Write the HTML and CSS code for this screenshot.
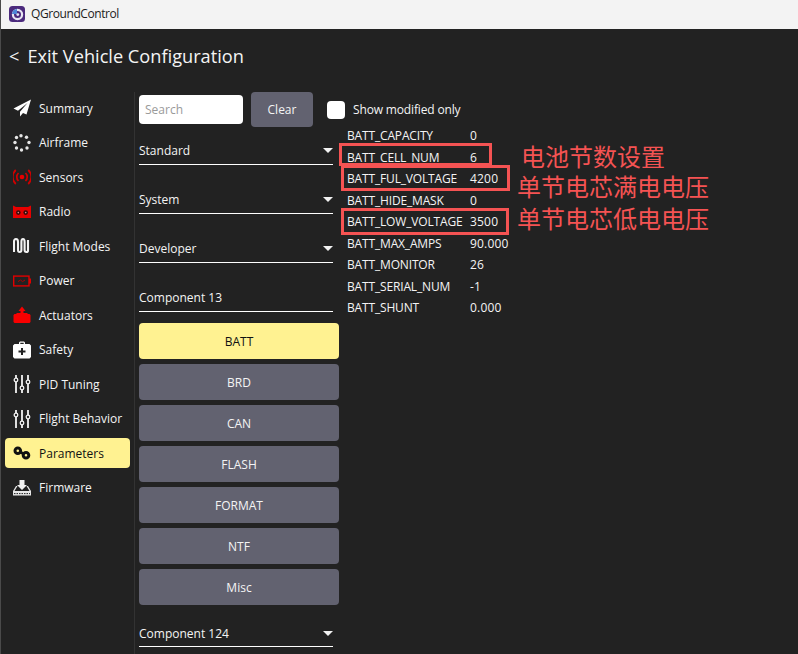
FILE: index.html
```html
<!DOCTYPE html>
<html lang="en">
<head>
<meta charset="utf-8">
<title>QGroundControl</title>
<link rel="stylesheet" href="styles.css">
</head>
<body>
<div class="window">
  <header class="titlebar">
    <svg class="app-icon" viewBox="0 0 16 16"><rect width="16" height="16" rx="3.5" fill="#4b2a7d"/><circle cx="8.5" cy="8.5" r="4.6" fill="none" stroke="#e8e6f2" stroke-width="2.2"/><path d="M3 8a5.5 5.5 0 0 1 5-5v5z" fill="#4f86d6"/><circle cx="8.800" cy="8.600" r="1.400" fill="#e8e6f2"/></svg>
    <span class="app-name">QGroundControl</span>
  </header>
  <div class="exit-bar"><span class="chev">&lt;</span><span>Exit Vehicle Configuration</span></div>
  <div class="main">
    <nav class="sidebar">
      <div class="nav-item"><svg class="ico" viewBox="0 0 18 18"><path d="M18 .5 .5 9.500l4.500 2.200L14.500 4 7 12.800V17.500l3-3.600 3.500 1.700z" fill="#fff"/></svg><span>Summary</span></div>
      <div class="nav-item"><svg class="ico" viewBox="0 0 18 18" fill="#e6e6e6"><circle cx="8" cy="1.800" r="1.700"/><circle cx="13.500" cy="3.300" r="1.700"/><circle cx="16" cy="8.500" r="1.700"/><circle cx="14" cy="14" r="1.700"/><circle cx="8.500" cy="16" r="1.700"/><circle cx="3.500" cy="14" r="1.700"/><circle cx="2" cy="8.500" r="1.700"/><circle cx="3.500" cy="3.500" r="1.700"/></svg><span>Airframe</span></div>
      <div class="nav-item"><svg class="ico" viewBox="0 0 18 18" fill="none" stroke="#d00000" stroke-width="1.700"><circle cx="9" cy="9" r="2.300" fill="#e80000" stroke="none"/><path d="M5.500 5a5.500 5.500 0 0 0 0 8M12.500 5a5.500 5.500 0 0 1 0 8M2.800 2a9.500 9.500 0 0 0 0 14M15.200 2a9.500 9.500 0 0 1 0 14"/></svg><span>Sensors</span></div>
      <div class="nav-item"><svg class="ico" viewBox="0 0 18 18"><path d="M0 2.500l3 1.500h12l3-1.500V15H0z" fill="#e80000"/><circle cx="5.300" cy="9.600" r="2.300" fill="#3a0a0a"/><circle cx="12.700" cy="9.600" r="2.300" fill="#3a0a0a"/><circle cx="5.300" cy="9.600" r=".8" fill="#d88"/><circle cx="12.700" cy="9.600" r=".8" fill="#d88"/></svg><span>Radio</span></div>
      <div class="nav-item"><svg class="ico" viewBox="0 0 18 18" fill="none" stroke="#f2f2f2" stroke-width="2.100"><path d="M1 15V5q0-3 2-3t2 3v8q0 2 1.700 2t1.700-2V5q0-3 1.600-3t1.600 3v8q0 2 1.800 2t1.600-2V3"/></svg><span>Flight Modes</span></div>
      <div class="nav-item"><svg class="ico" viewBox="0 0 18 18"><rect x=".7" y="4.100" width="15.300" height="9.800" fill="none" stroke="#e00000" stroke-width="1.400"/><rect x="16" y="6.500" width="2" height="5" fill="#e00000"/><path d="M5 9.600 7.500 8l2 1.600L12 8" fill="none" stroke="#b00000"/></svg><span>Power</span></div>
      <div class="nav-item"><svg class="ico" viewBox="0 0 18 18"><path d="M9 .5 12.500 5H10.500v2H14l1 1h1.500l1 1v7l-1 1h-15l-1-1V9l1-1H3l1-1h3.500V5H5.500z" fill="#f80000"/></svg><span>Actuators</span></div>
      <div class="nav-item"><svg class="ico" viewBox="0 0 18 18"><path fill-rule="evenodd" fill="#fff" d="M6 3V1.500L7 .5h4l1 1V3h4.500L18 4.500V16l-1.500 1.500h-15L0 16V4.500L1.500 3zM7.300 3h3.400V1.800H7.300zM8 7v2.500H5.500v2H8V14h2v-2.500h2.500v-2H10V7z"/></svg><span>Safety</span></div>
      <div class="nav-item"><svg class="ico" viewBox="0 0 18 18" fill="none" stroke="#f2f2f2" stroke-width="1.300"><path d="M3 0v3M3 7v11M9 0v11M9 15v3M15 0v5M15 9v9" stroke-width="1.800"/><circle cx="3" cy="5" r="1.800"/><circle cx="9" cy="13" r="1.800"/><circle cx="15" cy="7" r="1.800"/></svg><span>PID Tuning</span></div>
      <div class="nav-item"><svg class="ico" viewBox="0 0 18 18" fill="none" stroke="#f2f2f2" stroke-width="1.300"><path d="M3 0v3M3 7v11M9 0v11M9 15v3M15 0v5M15 9v9" stroke-width="1.800"/><circle cx="3" cy="5" r="1.800"/><circle cx="9" cy="13" r="1.800"/><circle cx="15" cy="7" r="1.800"/></svg><span>Flight Behavior</span></div>
      <div class="nav-item active"><svg class="ico" viewBox="0 0 18 18" fill="none" stroke="#111" stroke-width="3"><circle cx="4.800" cy="6.800" r="2.800"/><circle cx="13" cy="11.200" r="2.800"/><path d="M7 8l4 2"/></svg><span>Parameters</span></div>
      <div class="nav-item"><svg class="ico" viewBox="0 0 18 18"><path d="M6.500 1h5v5h2.500L9 11 4 6h2.500z" fill="#f2f2f2"/><path d="M3 7 0 12v4.500h18V12l-3-5h-1.500l3 5H1.500l3-5z" fill="#e6e6e6"/><path d="M1 14.600h16" stroke="#222" stroke-dasharray="1.500 1"/></svg><span>Firmware</span></div>
    </nav>
    <section class="content">
      <div class="toolbar">
        <div class="search">Search</div>
        <div class="btn clear">Clear</div>
        <div class="check"></div>
        <span class="check-label">Show modified only</span>
      </div>
      <div class="groups">
        <div class="drop first"><span>Standard</span><i class="caret"></i></div>
        <div class="drop"><span>System</span><i class="caret"></i></div>
        <div class="drop"><span>Developer</span><i class="caret"></i></div>
        <div class="drop plain"><span>Component 13</span></div>
        <div class="btn comp on">BATT</div>
        <div class="btn comp">BRD</div>
        <div class="btn comp">CAN</div>
        <div class="btn comp">FLASH</div>
        <div class="btn comp">FORMAT</div>
        <div class="btn comp">NTF</div>
        <div class="btn comp">Misc</div>
        <div class="drop last"><span>Component 124</span><i class="caret"></i></div>
      </div>
      <div class="params">
        <span class="pn">BATT_CAPACITY</span><span class="pv">0</span>
        <span class="pn">BATT_CELL_NUM</span><span class="pv">6</span>
        <span class="pn">BATT_FUL_VOLTAGE</span><span class="pv">4200</span>
        <span class="pn">BATT_HIDE_MASK</span><span class="pv">0</span>
        <span class="pn">BATT_LOW_VOLTAGE</span><span class="pv">3500</span>
        <span class="pn">BATT_MAX_AMPS</span><span class="pv">90.000</span>
        <span class="pn">BATT_MONITOR</span><span class="pv">26</span>
        <span class="pn">BATT_SERIAL_NUM</span><span class="pv">-1</span>
        <span class="pn">BATT_SHUNT</span><span class="pv">0.000</span>
      </div>
    </section>
  </div>
  <div class="mark m1"></div>
  <div class="mark m2"></div>
  <div class="mark m3"></div>
  <div class="note n1">电池节数设置</div>
  <div class="note n2">单节电芯满电电压</div>
  <div class="note n3">单节电芯低电电压</div>
</div>
</body>
</html>
```
FILE: styles.css
```css
* { box-sizing: border-box; }
html, body { margin: 0; height: 100%; overflow: hidden; }
body { background: #222; }
.window {
  position: relative;
  width: 798px;
  height: 654px;
  background: #222;
  color: #f4f4f4;
  font-family: "Open Sans", sans-serif;
  font-size: 12px;
  border-left: 1px solid #4a4a4a;
  overflow: hidden;
}
.titlebar {
  height: 29px;
  margin-left: -1px;
  background: #f3f3f3;
  display: flex;
  align-items: center;
  padding: 0 0 2px 9px;
  gap: 6px;
  color: #1c1c1c;
}
.app-icon { width: 16px; height: 16px; }
.app-name { font-size: 12px; letter-spacing: -.42px; }
.exit-bar {
  height: 63px;
  padding: 0 0 9px 8px;
  display: flex;
  align-items: center;
  gap: 8px;
  font-size: 18.200px;
  line-height: 24px;
}
.main { display: flex; height: 562px; }
.sidebar {
  width: 134px;
  padding: 1px 4px 0;
  border-right: 1px solid #333;
  display: flex;
  flex-direction: column;
  gap: 4.500px;
}
.nav-item {
  height: 30px;
  flex: none;
  display: flex;
  align-items: center;
  padding-left: 8px;
  gap: 8px;
  border-radius: 4px;
  white-space: nowrap;
}
.nav-item.active { background: #fff291; color: #111; }
.ico { width: 18px; height: 18px; flex: none; }
.content {
  flex: 1;
  display: grid;
  grid-template-columns: 200px 1fr;
  grid-template-rows: 33px 1fr;
  column-gap: 8px;
  padding-left: 4px;
}
.toolbar {
  grid-column: 1 / 3;
  display: flex;
  align-items: flex-start;
  white-space: nowrap;
}
.search {
  width: 104px;
  height: 29px;
  margin-top: 3px;
  padding-left: 6px;
  background: #fff;
  border-radius: 4px;
  color: #9a9a9a;
  line-height: 29px;
}
.btn {
  background: #626270;
  border-radius: 4px;
  color: #f4f4f4;
  text-align: center;
}
.clear { width: 62px; height: 35px; margin-left: 8px; line-height: 35px; flex: none; }
.check {
  width: 18px;
  height: 18px;
  margin: 9px 8px 0 14px;
  background: #fff;
  border-radius: 4px;
  flex: none;
}
.check-label { line-height: 18px; margin-top: 9px; letter-spacing: -.15px; }
.groups { display: flex; flex-direction: column; }
.drop {
  width: 194px;
  height: 26px;
  margin-bottom: 23px;
  flex: none;
  border-bottom: 1px solid #fff;
  display: flex;
  justify-content: space-between;
  align-items: center;
  padding-bottom: 2px;
}
.drop.first { margin-top: 14px; }
.drop.plain { margin-bottom: 11px; }
.drop.last { margin: 16px 0 0; padding-bottom: 0; }
.caret {
  width: 0;
  height: 0;
  border-left: 5px solid transparent;
  border-right: 5px solid transparent;
  border-top: 5px solid #f2f2f2;
}
.comp { height: 36px; line-height: 38px; margin-bottom: 5px; flex: none; }
.comp:nth-last-child(2) { margin-bottom: 0; }
.comp.on { background: #fff291; color: #111; }
.params {
  display: grid;
  grid-template-columns: 123px 1fr;
  grid-auto-rows: 21.500px;
  align-items: center;
  align-content: start;
}
.pn { letter-spacing: -.16px; white-space: nowrap; }
.pv { letter-spacing: .2px; }
.mark {
  position: absolute;
  border: 3px solid #f55353;
}
.m1 { left: 338px; top: 143px; width: 153px; height: 23px; }
.m2 { left: 340px; top: 165px; width: 169px; height: 26px; }
.m3 { left: 340px; top: 208px; width: 168px; height: 27px; }
.note {
  position: absolute;
  color: #f55353;
  font-family: "Noto Sans CJK SC", sans-serif;
  font-size: 24px;
  line-height: 28px;
  white-space: nowrap;
}
.n1 { left: 520px; top: 142px; }
.n2 { left: 516px; top: 172px; }
.n3 { left: 516px; top: 204px; }
```
